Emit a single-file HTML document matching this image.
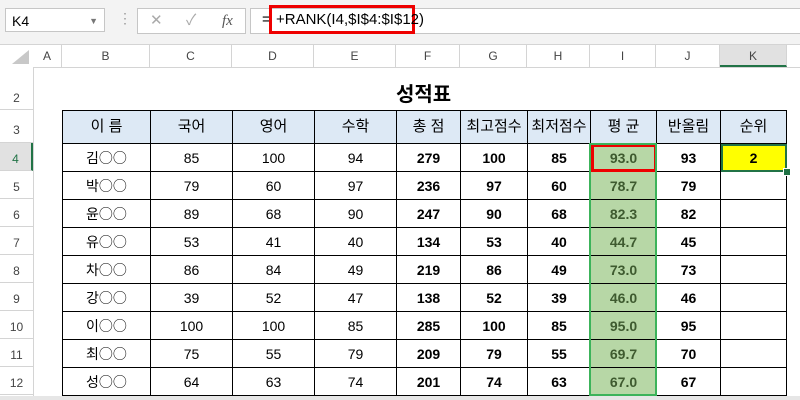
<!DOCTYPE html>
<html><head><meta charset="utf-8"><style>
body{margin:0;width:800px;height:400px;overflow:hidden;background:#fff;font-family:"Liberation Sans","Noto Sans CJK KR",sans-serif;position:relative}
.a{position:absolute}
.ch{position:absolute;top:45px;height:22px;line-height:22px;text-align:center;font-size:12px;color:#444;border-right:1px solid #d4d4d4;background:#fff}
.rh{position:absolute;left:0;width:33px;text-align:center;font-size:12px;color:#444;border-bottom:1px solid #d4d4d4;background:#fff;box-sizing:border-box}
table{position:absolute;left:62px;top:110px;border-collapse:collapse;table-layout:fixed}
td{border:1px solid #000;text-align:center;font-size:14px;padding:0;height:28px;box-sizing:border-box;color:#000;line-height:14px}
tr.h td{height:33px;background:#dde9f5;font-size:15px}
td.b{font-weight:bold}
td.n{font-family:"Noto Sans CJK KR",sans-serif;font-size:14px}
td.i{background:#b7d7a6;color:#3e5a2f;font-weight:bold}
</style></head><body>
<div class="a" style="left:0;top:0;width:800px;height:44px;background:#f3f3f3;border-bottom:1px solid #d4d4d4"></div>
<div class="a" style="left:5px;top:8px;width:100px;height:24px;background:#fff;border:1px solid #c6c6c6;font-size:14px;line-height:24px;padding-left:6px;box-sizing:border-box">K4<span style="position:absolute;right:6px;top:0;font-size:9px;color:#777">▼</span></div>
<div class="a" style="left:118px;top:10px;color:#999;font-size:14px">⋮</div>
<div class="a" style="left:137px;top:8px;width:109px;height:26px;background:#fff;border:1px solid #c6c6c6;box-sizing:border-box;font-size:15px;color:#aaa;line-height:24px"><span style="position:absolute;left:12px">✕</span><span style="position:absolute;left:48px">✓</span><span style="position:absolute;left:84px;color:#555;font-style:italic;font-family:'Liberation Serif',serif">fx</span></div>
<div class="a" style="left:250px;top:8px;width:560px;height:26px;background:#fff;border:1px solid #c6c6c6;box-sizing:border-box"></div>
<div class="a" style="left:262px;top:11px;font-size:15px">=</div>
<div class="a" style="left:269px;top:5px;width:146px;height:29px;border:3px solid #e00;box-sizing:border-box;font-size:15px;line-height:23px;padding-left:4px;white-space:nowrap">+RANK(I4,$I$4:$I$12)</div>
<div class="a" style="left:0;top:45px;width:800px;height:22px;background:#fff;border-bottom:1px solid #d4d4d4"></div>
<div class="a" style="left:12px;top:50px;width:0;height:0;border-left:17px solid transparent;border-bottom:14px solid #c8c8c8"></div>
<div class="ch" style="left:33px;width:28px">A</div>
<div class="ch" style="left:62px;width:87px">B</div>
<div class="ch" style="left:150px;width:81px">C</div>
<div class="ch" style="left:232px;width:81px">D</div>
<div class="ch" style="left:314px;width:81px">E</div>
<div class="ch" style="left:396px;width:63px">F</div>
<div class="ch" style="left:460px;width:66px">G</div>
<div class="ch" style="left:527px;width:62px">H</div>
<div class="ch" style="left:590px;width:65px">I</div>
<div class="ch" style="left:656px;width:63px">J</div>
<div class="ch" style="left:720px;width:66px;background:#e1e1e1;border-bottom:2px solid #217346;height:20px">K</div>
<div class="a" style="left:33px;top:67px;width:1px;height:333px;background:#d4d4d4"></div>
<div class="rh" style="top:67px;height:43px;line-height:62px">2</div>
<div class="rh" style="top:110px;height:33px;line-height:40px">3</div>
<div class="rh" style="top:143px;height:28px;line-height:32px;background:#e1e1e1;color:#217346;border-right:2px solid #217346">4</div>
<div class="rh" style="top:171px;height:28px;line-height:32px">5</div>
<div class="rh" style="top:199px;height:28px;line-height:32px">6</div>
<div class="rh" style="top:227px;height:28px;line-height:32px">7</div>
<div class="rh" style="top:255px;height:28px;line-height:32px">8</div>
<div class="rh" style="top:283px;height:28px;line-height:32px">9</div>
<div class="rh" style="top:311px;height:28px;line-height:32px">10</div>
<div class="rh" style="top:339px;height:28px;line-height:32px">11</div>
<div class="rh" style="top:367px;height:28px;line-height:32px">12</div>
<div class="a" style="left:0;top:396px;width:800px;height:4px;background:#e6e6e6"></div>
<div class="a" style="left:396px;top:78px;font-size:20px;font-weight:bold">성적표</div>
<table>
<colgroup><col style="width:88px"><col style="width:82px"><col style="width:82px"><col style="width:82px"><col style="width:64px"><col style="width:67px"><col style="width:63px"><col style="width:66px"><col style="width:64px"><col style="width:66px"></colgroup>
<tr class="h"><td>이 름</td><td>국어</td><td>영어</td><td>수학</td><td>총 점</td><td>최고점수</td><td>최저점수</td><td>평 균</td><td>반올림</td><td>순위</td></tr>
<tr><td class="n">김○○</td><td>85</td><td>100</td><td>94</td><td class="b">279</td><td class="b">100</td><td class="b">85</td><td class="i" style="outline:3px solid #e00;outline-offset:-3px">93.0</td><td class="b">93</td><td class="b" style="background:#ff0;outline:2px solid #217346;outline-offset:-2px">2</td></tr>
<tr><td class="n">박○○</td><td>79</td><td>60</td><td>97</td><td class="b">236</td><td class="b">97</td><td class="b">60</td><td class="i">78.7</td><td class="b">79</td><td></td></tr>
<tr><td class="n">윤○○</td><td>89</td><td>68</td><td>90</td><td class="b">247</td><td class="b">90</td><td class="b">68</td><td class="i">82.3</td><td class="b">82</td><td></td></tr>
<tr><td class="n">유○○</td><td>53</td><td>41</td><td>40</td><td class="b">134</td><td class="b">53</td><td class="b">40</td><td class="i">44.7</td><td class="b">45</td><td></td></tr>
<tr><td class="n">차○○</td><td>86</td><td>84</td><td>49</td><td class="b">219</td><td class="b">86</td><td class="b">49</td><td class="i">73.0</td><td class="b">73</td><td></td></tr>
<tr><td class="n">강○○</td><td>39</td><td>52</td><td>47</td><td class="b">138</td><td class="b">52</td><td class="b">39</td><td class="i">46.0</td><td class="b">46</td><td></td></tr>
<tr><td class="n">이○○</td><td>100</td><td>100</td><td>85</td><td class="b">285</td><td class="b">100</td><td class="b">85</td><td class="i">95.0</td><td class="b">95</td><td></td></tr>
<tr><td class="n">최○○</td><td>75</td><td>55</td><td>79</td><td class="b">209</td><td class="b">79</td><td class="b">55</td><td class="i">69.7</td><td class="b">70</td><td></td></tr>
<tr><td class="n">성○○</td><td>64</td><td>63</td><td>74</td><td class="b">201</td><td class="b">74</td><td class="b">63</td><td class="i">67.0</td><td class="b">67</td><td></td></tr>
</table>
<div class="a" style="left:589px;top:143px;width:68px;height:253px;border:2px solid #3cb35a;box-sizing:border-box;pointer-events:none"></div>
<div class="a" style="left:783px;top:168px;width:6px;height:6px;background:#217346;border:1px solid #fff"></div>
</body></html>
